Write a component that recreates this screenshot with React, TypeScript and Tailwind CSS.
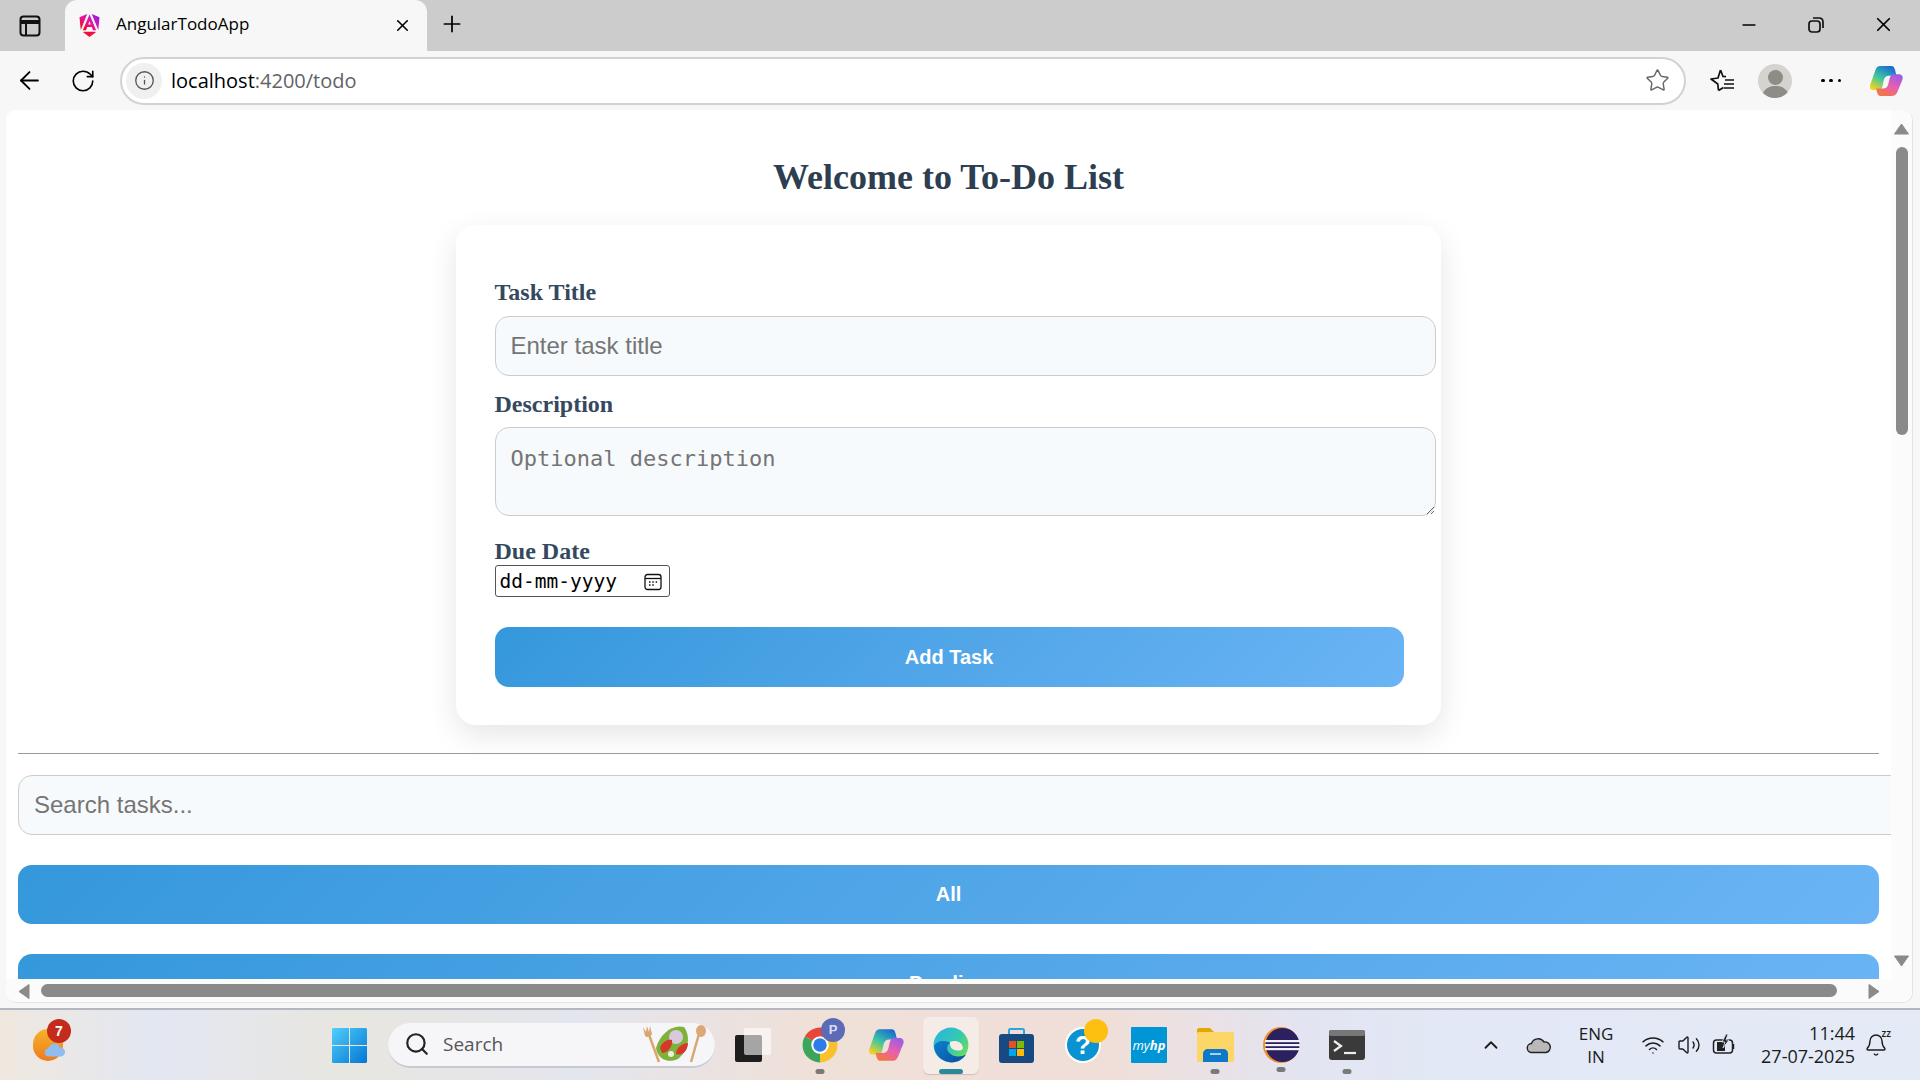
import React from "react";
import { ArrowLeft, ChevronUp, Info, Minus, Plus, RotateCw, Search, Star, Volume2, Wifi, X, Bell } from "lucide-react";

const Triangle = ({ dir }: { dir: "up" | "down" | "left" | "right" }) => {
  const points = {
    up: "7,1 14,11 0,11",
    down: "0,1 14,1 7,11",
    left: "11,0 11,14 1,7",
    right: "1,0 1,14 11,7",
  }[dir];
  return (
    <svg width={dir === "up" || dir === "down" ? 15 : 12} height={dir === "up" || dir === "down" ? 12 : 15} viewBox={dir === "up" || dir === "down" ? "0 0 14 12" : "0 0 12 14"}>
      <polygon points={points} fill="#8a8a8a" stroke="#8a8a8a" strokeLinejoin="round" />
    </svg>
  );
};

const AngularLogo = () => (
  <svg width="25" height="25" viewBox="0 0 24 24">
    <defs>
      <linearGradient id="ng" x1="0" y1="1" x2="1" y2="0">
        <stop offset="0" stopColor="#f0060b" />
        <stop offset="0.5" stopColor="#e8149c" />
        <stop offset="1" stopColor="#7b1ff5" />
      </linearGradient>
    </defs>
    <path d="M9.800 1 2.400 4l1.200 12.200L9.800 1ZM14.200 1l7.400 3-1.200 12.200L14.200 1Z" fill="url(#ng)" />
    <path d="M12 1.500 5.600 16.500h3l1.200-3h4.400l1.200 3h3L12 1.500Zm-1.200 9.500L12 7.600l1.200 3.400h-2.400Z" fill="url(#ng)" />
    <path d="M6.500 18h11l.6.4L12 23l-6.100-4.600Z" fill="#f0103c" />
  </svg>
);

const CopilotLogo = ({ size, id }: { size: number; id: string }) => (
  <svg width={size} height={size} viewBox="0 0 48 48">
    <defs>
      <linearGradient id={`${id}a`} x1="0.2" y1="1" x2="0.8" y2="0">
        <stop offset="0" stopColor="#f5d21f" />
        <stop offset="0.45" stopColor="#3fc7a0" />
        <stop offset="1" stopColor="#1565d8" />
      </linearGradient>
      <linearGradient id={`${id}b`} x1="0.8" y1="0" x2="0.2" y2="1">
        <stop offset="0" stopColor="#9a5ce6" />
        <stop offset="0.5" stopColor="#e85fb0" />
        <stop offset="1" stopColor="#f5783a" />
      </linearGradient>
    </defs>
    <path d="M17 4h14c3 0 4 2 5 5l2 8H28c-4 0-6 2-7 6l-2 9c-1 4-3 4-7 4H7c-4 0-5-3-4-7l7-20c2-4 3-5 7-5Z" fill={`url(#${id}a)`} />
    <path d="M31 44H17c-3 0-4-2-5-5l-1-5h9c4 0 6-2 7-6l2-8c1-4 3-5 7-5h5c4 0 6 3 5 7l-7 17c-2 4-4 5-8 5Z" fill={`url(#${id}b)`} />
  </svg>
);

const ChromeLogo = () => (
  <svg width="38" height="38" viewBox="0 0 48 48">
    <path d="M24 24 4.950 13A22 22 0 0 1 43.050 13Z" fill="#e8453c" />
    <path d="M24 24 43.050 13A22 22 0 0 1 24 46Z" fill="#fbc02d" />
    <path d="M24 24 24 46A22 22 0 0 1 4.950 13Z" fill="#3ba55c" />
    <circle cx="24" cy="24" r="11" fill="#fff" />
    <circle cx="24" cy="24" r="8.500" fill="#2f7be8" />
  </svg>
);

const EdgeLogo = () => (
  <svg width="38" height="38" viewBox="0 0 48 48">
    <defs>
      <linearGradient id="edgeTop" x1="0" y1="0" x2="1" y2="0.7">
        <stop offset="0" stopColor="#2ab3e6" />
        <stop offset="0.6" stopColor="#33c9b0" />
        <stop offset="1" stopColor="#6fdc5c" />
      </linearGradient>
      <linearGradient id="edgeLow" x1="0" y1="0" x2="1" y2="1">
        <stop offset="0" stopColor="#0f7ed0" />
        <stop offset="1" stopColor="#0b4f9e" />
      </linearGradient>
    </defs>
    <circle cx="24" cy="24" r="22" fill="url(#edgeTop)" />
    <path d="M2.500 26C4 38 14 46 25 46c8 0 14-4 18-10-7 4-16 3-21-2-4-4-4-10 1-13C15 17 4 19 2.500 26Z" fill="url(#edgeLow)" />
    <path d="M23 20c7-3 15 0 16 7 .5 3-3 4-6 4-5 0-9-2-10-6-.4-2-.4-4 0-5Z" fill="#f5ece8" />
  </svg>
);

const StoreLogo = () => (
  <svg width="35" height="36" viewBox="0 0 35 36">
    <path d="M10 8V3.500C10 2.500 10.500 2 11.500 2h12c1 0 1.500.5 1.500 1.500V8" fill="none" stroke="#2aa5e0" strokeWidth="2" />
    <rect x="0" y="7" width="35" height="29" rx="3" fill="#164a80" />
    <rect x="10" y="14" width="7" height="7" fill="#e8501f" />
    <rect x="18" y="14" width="7" height="7" fill="#7fb900" />
    <rect x="10" y="22" width="7" height="7" fill="#00a4ef" />
    <rect x="18" y="22" width="7" height="7" fill="#ffb900" />
  </svg>
);

const FolderLogo = () => (
  <svg width="37" height="34" viewBox="0 0 37 34">
    <path d="M0 2C0 1 1 0 2 0h11l4 4h18c1 0 2 1 2 2v3H0Z" fill="#e0a800" />
    <rect x="0" y="4" width="37" height="30" rx="1.500" fill="#fcd666" />
    <path d="M6 34V26c0-3 2-5 5-5h15c3 0 5 2 5 5v8Z" fill="#0f79c9" />
    <rect x="13" y="25" width="11" height="2" fill="#9fd4f5" />
  </svg>
);

const EclipseLogo = () => (
  <svg width="38" height="38" viewBox="0 0 38 38">
    <circle cx="19" cy="19" r="18" fill="#f0902a" />
    <circle cx="20.500" cy="19" r="17" fill="#2c2160" />
    <rect x="3" y="14" width="35" height="2.200" fill="#f4f2f8" />
    <rect x="3" y="18" width="35" height="2.200" fill="#f4f2f8" />
    <rect x="3" y="22" width="35" height="2.200" fill="#f4f2f8" />
  </svg>
);

const TerminalLogo = () => (
  <svg width="36" height="30" viewBox="0 0 36 30">
    <rect x="0" y="0" width="36" height="30" rx="3" fill="#3a3a3a" />
    <rect x="0" y="0" width="36" height="6" rx="2" fill="#777" />
    <path d="M5 11l7 5-7 5" fill="none" stroke="#eee" strokeWidth="2.200" />
    <path d="M15 23h12" stroke="#eee" strokeWidth="2.200" />
  </svg>
);

const SaladArt = () => (
  <svg width="66" height="40" viewBox="0 0 66 40">
    <path d="M6 8l11 30" stroke="#d9a670" strokeWidth="2.500" />
    <path d="M1 3l2 9c2 2 6 1 7-2l-2-8-1 6-2-6-1 6Z" fill="#d9a670" />
    <path d="M57 10l-8 28" stroke="#d9a670" strokeWidth="2.500" />
    <ellipse cx="59" cy="7" rx="5" ry="6" fill="#dca878" />
    <path d="M14 24C18 10 30 0 42 3c6 8 6 22-6 32-8 4-20 2-22-11Z" fill="#7fb23a" />
    <circle cx="34" cy="13" r="7" fill="#dcc8dd" />
    <path d="M18 24c2-7 9-9 12-8 1 6-4 13-10 13Z" fill="#d6392a" />
    <path d="M34 30c0-6 6-11 12-11 0 7-5 13-12 11Z" fill="#d6392a" />
    <circle cx="29" cy="30" r="3" fill="#f0eee2" />
  </svg>
);

const BatteryCharging = () => (
  <svg width="24" height="24" viewBox="0 0 24 24">
    <rect x="1.500" y="7" width="19" height="13" rx="3" fill="none" stroke="#222" strokeWidth="1.500" />
    <path d="M21.500 11v5" stroke="#222" strokeWidth="1.500" />
    <path d="M5 9h8v9H5Z" fill="#222" />
    <path d="M14 1l-4 8h3l-2 6 6-8h-3l2-6Z" fill="#222" stroke="#e4ebf7" strokeWidth="0.800" />
  </svg>
);

const ui = "font-['Open_Sans',sans-serif]";
const serif = "font-['Liberation_Serif',serif]";
const arial = "font-['Liberation_Sans',sans-serif]";
const labelClass = `block h-[28px] text-[24px] font-bold leading-[28px] text-[#34495e] ${serif}`;
const fieldClass = "block rounded-[14px] border border-[#cccccc] bg-[#f7fafc] px-[15px] outline-none placeholder:text-[#757575]";
const buttonClass = `block h-[59px] rounded-[14px] bg-linear-135 from-[#3498db] to-[#6ab4f5] text-center text-[20px] font-bold leading-[59px] text-white ${arial}`;

export default function App() {
  return (
    <div className={`flex h-screen w-[1920px] flex-col overflow-hidden bg-[#f7f7f7] ${ui}`}>
      {/* Tab strip */}
      <div className="flex h-[51px] items-center bg-[#cccccc] text-black">
        <svg className="ml-[19px]" width="22" height="22" viewBox="0 0 22 22" fill="none" stroke="#111" strokeWidth="2">
          <rect x="1.500" y="1.500" width="19" height="19" rx="3" />
          <path d="M7 7v13" />
          <path d="M2 7h18" strokeWidth="4" />
        </svg>
        <div className="ml-[24px] flex h-[51px] w-[362px] items-center rounded-t-[12px] bg-[#f7f7f7] pl-[12px]">
          <AngularLogo />
          <span className="ml-[14px] pb-[4px] text-[17px] leading-none">AngularTodoApp</span>
          <X className="ml-auto mr-[15px]" size={19} strokeWidth={2} />
        </div>
        <Plus className="ml-[12px] mb-[3px]" size={26} strokeWidth={1.600} />
        <Minus className="ml-[1274px] mb-[2px]" size={20} strokeWidth={2} />
        <svg className="ml-[49px] mb-[2px]" width="16" height="16" viewBox="0 0 16 16" fill="none" stroke="#111" strokeWidth="1.700">
          <rect x="1" y="4" width="11" height="11" rx="3" />
          <path d="M5 1h6c2.500 0 4 1.500 4 4v6" />
        </svg>
        <X className="ml-[48px] mb-[2px]" size={23} strokeWidth={1.800} />
      </div>

      {/* Address row */}
      <div className="flex h-[59px] items-center text-black">
        <ArrowLeft className="ml-[15px]" size={29} strokeWidth={1.500} />
        <RotateCw className="ml-[26px]" size={26} strokeWidth={1.500} />
        <div className="ml-[24px] flex h-[48px] w-[1566px] items-center rounded-full border-2 border-[#d2d2d2] bg-white pl-[4px]">
          <span className="flex size-[36px] items-center justify-center rounded-full bg-[#f0f0f0]">
            <Info size={21} strokeWidth={1.500} className="text-[#555]" />
          </span>
          <span className="ml-[9px] text-[20px] leading-none">
            localhost<span className="text-[#5f6368]">:4200/todo</span>
          </span>
          <Star className="ml-auto mr-[14px] text-[#666]" size={25} strokeWidth={1.400} />
        </div>
        <svg className="ml-[23px]" width="26" height="26" viewBox="0 0 26 26" fill="none" stroke="#111" strokeWidth="1.700" strokeLinejoin="round">
          <path d="M11.500 2l2.500 6.500 3 .2M9.500 22.500 8.800 16 2 11l7-1 2.500-8M9.500 22.500l5-3" />
          <path d="M16 12h9M15 16h10M15 20h10" />
        </svg>
        <span className="relative ml-[23px] flex size-[34px] items-end justify-center overflow-hidden rounded-full bg-[#d5d3d0]">
          <span className="absolute top-[6px] size-[15px] rounded-full bg-[#8f8b86]" />
          <span className="h-[12px] w-[27px] rounded-t-full bg-[#8f8b86]" />
        </span>
        <span className="ml-[29px] flex w-[20px] justify-between">
          <span className="size-[3.500px] rounded-full bg-black" />
          <span className="size-[3.500px] rounded-full bg-black" />
          <span className="size-[3.500px] rounded-full bg-black" />
        </span>
        <span className="ml-[27px]">
          <CopilotLogo size={36} id="cpa" />
        </span>
      </div>

      {/* Page viewport */}
      <div className="mx-[6px] mr-[7px] flex h-[893px] w-[1907px] flex-col overflow-hidden rounded-[10px] border-b border-r border-[#e3e3e3] bg-white">
        <div className="flex h-[869px]">
          <div className="w-[1886px] overflow-hidden px-[12px]">
            <h1 className={`pt-[47px] text-center text-[36px] font-bold leading-[40px] text-[#2c3e50] ${serif}`}>
              Welcome to To-Do List
            </h1>
            <div className="mx-auto mt-[28px] h-[500px] w-[985px] rounded-[20px] bg-white pl-[38.500px] pt-[53px] shadow-[0_10px_30px_rgba(0,0,0,0.1)]">
              <label className={labelClass}>Task Title</label>
              <input
                className={`${fieldClass} mt-[10px] h-[60px] w-[941.500px] text-[24px] ${arial}`}
                placeholder="Enter task title"
              />
              <label className={`${labelClass} mt-[14px]`}>Description</label>
              <textarea
                className={`${fieldClass} mt-[9px] h-[89px] w-[941.500px] py-[18px] text-[22px] leading-[26px] font-['DejaVu_Sans_Mono',monospace]`}
                placeholder="Optional description"
              />
              <label className={`${labelClass} mt-[21px]`}>Due Date</label>
              <div className="flex h-[32px] w-[175px] items-center rounded-[3px] border border-[#555] bg-white pl-[4px] pt-[1px] text-[19.500px] text-black font-['DejaVu_Sans_Mono',monospace]">
                <span>dd-mm-yyyy</span>
                <svg className="ml-auto mr-[7px]" width="18" height="18" viewBox="0 0 18 18" fill="none" stroke="#111" strokeWidth="1.300">
                  <rect x="1" y="1.500" width="16" height="15" rx="2.500" />
                  <path d="M1 5.500h16" />
                  <path d="M5 9h1.500M8.300 9h1.500M11.600 9h1.500M5 12h1.500M8.300 12h1.500" strokeWidth="1.500" />
                </svg>
              </div>
              <div className={`${buttonClass} mt-[30px] h-[60px] w-[909px] leading-[60px]`}>Add Task</div>
            </div>
            <hr className="mt-[28px] border-t border-[#9a9a9a]" />
            <input
              className={`${fieldClass} mt-[21px] h-[60px] w-[1920px] text-[24px] ${arial}`}
              placeholder="Search tasks..."
            />
            <div className={`${buttonClass} mt-[30px]`}>All</div>
            <div className={`${buttonClass} mt-[30px]`}>Pending</div>
          </div>
          <div className="flex w-[21px] flex-col items-center bg-[#fbfbfb] pt-[13px]">
            <Triangle dir="up" />
            <div className="mt-[12px] h-[288px] w-[12px] rounded-full bg-[#8a8a8a]" />
            <div className="mt-[520px]">
              <Triangle dir="down" />
            </div>
          </div>
        </div>
        <div className="flex h-[24px] items-start bg-[#fbfbfb] pl-[12px] pt-[5px]">
          <Triangle dir="left" />
          <div className="ml-[11px] h-[13px] w-[1796px] rounded-full bg-[#8a8a8a]" />
          <div className="ml-[31px]">
            <Triangle dir="right" />
          </div>
        </div>
      </div>

      <div className="h-[5px]" />

      {/* Taskbar */}
      <div className="flex h-[72px] items-center border-t-2 border-[#b3b7c0] bg-[linear-gradient(90deg,#efe8df_0%,#e3e7f2_8%,#e8e6e0_18%,#e4e6ee_30%,#efe0d8_42%,#f0dfd9_58%,#e3e4f2_68%,#e2e8f5_75%,#e4ebf7_100%)] text-[#1c1c1c]">
        <span className="relative ml-[33px] block h-[32px] w-[37px]">
          <span className="absolute left-0 top-0 h-[32px] w-[30px] rounded-full bg-linear-to-b from-[#f5b32a] to-[#ee7a1c]" />
          <svg className="absolute left-[11px] top-[14px]" width="22" height="14" viewBox="0 0 22 14">
            <path d="M5 13.500a4 4 0 0 1-.5-8A6 6 0 0 1 16 4.500a4.500 4.500 0 0 1 1 9Z" fill="#8fbdf0" />
          </svg>
          <span className={`absolute -top-[10px] left-[14px] flex h-[24px] w-[24px] items-center justify-center rounded-full bg-[#c42b1c] text-[14px] font-bold text-white ${arial}`}>
            7
          </span>
        </span>
        <svg className="ml-[262px]" width="35" height="35" viewBox="0 0 35 35">
          <defs>
            <linearGradient id="win" x1="0" y1="0" x2="1" y2="1">
              <stop offset="0" stopColor="#52cffa" />
              <stop offset="1" stopColor="#0276d4" />
            </linearGradient>
          </defs>
          <path d="M0 1.500C0 .7.700 0 1.500 0H17v17H0ZM18 0h15.500c.8 0 1.500.7 1.500 1.500V17H18ZM0 18h17v17H1.500C.7 35 0 34.300 0 33.500ZM18 18h17v15.500c0 .8-.7 1.500-1.500 1.500H18Z" fill="url(#win)" />
        </svg>
        <div className="ml-[21px] flex h-[45px] w-[327px] items-center rounded-full border-b-2 border-[#c9c9d2] bg-[#f6f6f9] pl-[16px]">
          <Search size={26} strokeWidth={2} className="text-[#222]" />
          <span className="ml-[13px] text-[19px] leading-none text-[#555]">Search</span>
          <span className="ml-auto mr-[7px]">
            <SaladArt />
          </span>
        </div>
        <span className="relative ml-[20px] block h-[34px] w-[36px]">
          <span className="absolute bottom-0 left-0 h-[27px] w-[27px] rounded-[2px] bg-[#1e1e1e]" />
          <span className="absolute right-0 top-0 h-[27px] w-[27px] rounded-[2px] bg-white/60" />
        </span>
        <span className="relative ml-[30px] block size-[38px]">
          <ChromeLogo />
          <span className={`absolute -top-[8px] left-[20px] flex size-[24px] items-center justify-center rounded-full bg-[#5c6bb5] text-[13px] font-bold text-[#d9def5] ${arial}`}>
            P
          </span>
          <span className="absolute left-[19px] top-[43px] h-[5px] w-[9px] -translate-x-1/2 rounded-full bg-[#7a7a7a]" />
        </span>
        <span className="ml-[28px]">
          <CopilotLogo size={38} id="cpb" />
        </span>
        <span className="relative ml-[18px] flex h-[57px] w-[56px] items-center justify-center rounded-[6px] bg-[#f5ece8] shadow-[0_1px_1px_rgba(0,0,0,0.15)]">
          <EdgeLogo />
          <span className="absolute bottom-0 h-[5px] w-[24px] rounded-full bg-[#2a8a9a]" />
        </span>
        <span className="ml-[20px]">
          <StoreLogo />
        </span>
        <span className="relative ml-[31px] flex size-[36px] items-center justify-center rounded-full border-2 border-white bg-[#0a93d0]">
          <span className={`text-[26px] font-bold leading-none text-white ${arial}`}>?</span>
          <span className="absolute -right-[9px] -top-[10px] size-[24px] rounded-full bg-[#fdc010]" />
        </span>
        <span className="ml-[30px] flex h-[36px] w-[36px] items-center justify-center rounded-[1px] bg-[#0096d6] text-[13px] italic leading-none text-white">
          my<b>hp</b>
        </span>
        <span className="relative ml-[30px] block">
          <FolderLogo />
          <span className="absolute left-[18px] top-[41px] h-[5px] w-[9px] -translate-x-1/2 rounded-full bg-[#7a7a7a]" />
        </span>
        <span className="relative ml-[28px] block size-[38px]">
          <EclipseLogo />
          <span className="absolute left-[19px] top-[41px] h-[5px] w-[9px] -translate-x-1/2 rounded-full bg-[#7a7a7a]" />
        </span>
        <span className="relative ml-[29px] block h-[30px] w-[36px]">
          <TerminalLogo />
          <span className="absolute left-[18px] top-[39px] h-[5px] w-[9px] -translate-x-1/2 rounded-full bg-[#7a7a7a]" />
        </span>
        <ChevronUp className="ml-[115px]" size={22} strokeWidth={2} />
        <svg className="ml-[24px]" width="26" height="18" viewBox="0 0 26 18" fill="#b9b9b9" stroke="#222" strokeWidth="1.400">
          <path d="M6 16.500a4.500 4.500 0 0 1-.5-9A7 7 0 0 1 18 6a5.300 5.300 0 0 1 2 10.500Z" />
        </svg>
        <div className="ml-[24px] w-[40px] text-center text-[17px] leading-[23px]">
          <div>ENG</div>
          <div>IN</div>
        </div>
        <Wifi className="ml-[25px]" size={24} strokeWidth={1.500} />
        <Volume2 className="ml-[12px]" size={24} strokeWidth={1.400} />
        <span className="ml-[11px]">
          <BatteryCharging />
        </span>
        <div className="ml-[19px] w-[100px] text-right text-[18px] leading-[23px]">
          <div>11:44</div>
          <div>27-07-2025</div>
        </div>
        <span className="relative ml-[9px] block size-[24px]">
          <Bell size={24} strokeWidth={1.400} />
          <span className="absolute -right-[3px] -top-[5px] text-[10px] font-semibold leading-none">zz</span>
        </span>
      </div>
    </div>
  );
}
